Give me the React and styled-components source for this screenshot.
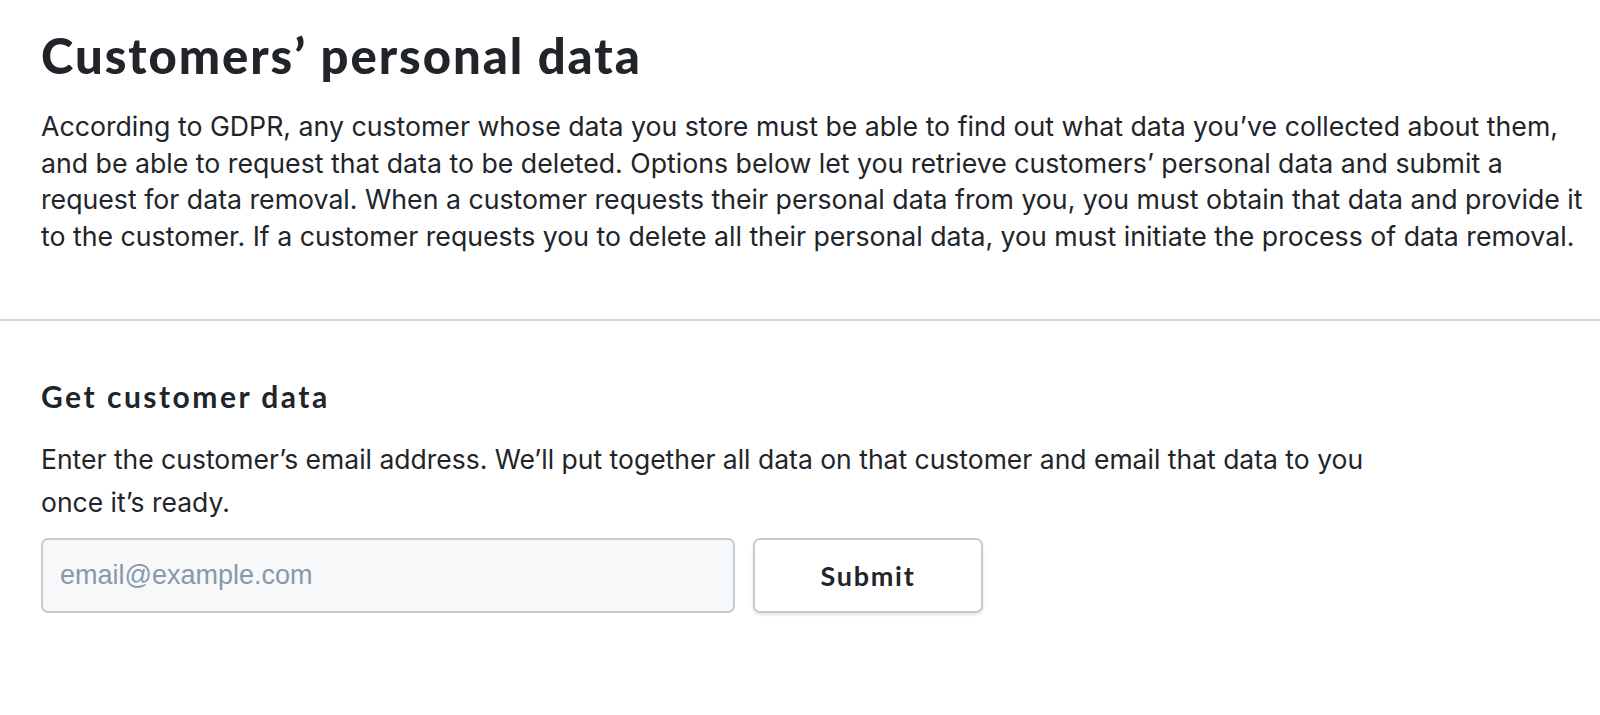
import React from "react";
import styled, { createGlobalStyle } from "styled-components";

const Global = createGlobalStyle`
  html, body { margin: 0; padding: 0; background: #ffffff; }
  body { font-family: "Inter", "Noto Sans", sans-serif; color: #212529; }
`;

const Page = styled.div`
  width: 1600px;
  min-height: 715px;
  background: #ffffff;
`;

const Section = styled.section`
  padding: ${(p) => p.$pad};
`;

const Title = styled.h1`
  margin: 0;
  font-family: "Lato", sans-serif;
  font-weight: 900;
  font-size: 49px;
  line-height: 59px;
  letter-spacing: 1.95px;
  color: #212529;
`;

const Lead = styled.p`
  margin: 23px 0 0;
  font-family: "Inter", sans-serif;
  font-size: 26.7px;
  line-height: 36.7px;
  color: #212529;
  max-width: 1555px;
`;

const Divider = styled.hr`
  margin: 0;
  border: 0;
  height: 2px;
  background: #cdd3db;
`;

const SubTitle = styled.h2`
  margin: 0;
  font-family: "Lato", sans-serif;
  font-weight: 700;
  font-size: 30px;
  line-height: 34px;
  letter-spacing: 2.5px;
  color: #212529;
`;

const Text = styled.p`
  margin: 25px 0 0;
  font-size: 26.5px;
  line-height: 43px;
  max-width: 1330px;
  color: #212529;
`;

const Form = styled.form`
  display: flex;
  gap: 18px;
  margin-top: 14px;
`;

const EmailInput = styled.input`
  box-sizing: border-box;
  width: 694px;
  height: 75px;
  padding: 0 17px;
  background: #f6f8fa;
  border: 2px solid #c3ccd6;
  border-radius: 7px;
  font-family: "Liberation Sans", "Arial", sans-serif;
  font-size: 27px;
  color: #212529;
  outline: none;
  &::placeholder { color: #8798aa; }
`;

const SubmitButton = styled.button`
  box-sizing: border-box;
  width: 230px;
  height: 75px;
  background: #ffffff;
  border: 2px solid #c3ccd6;
  border-radius: 7px;
  box-shadow: 0 2px 3px rgba(30, 40, 60, 0.12);
  font-family: "Lato", sans-serif;
  font-weight: 700;
  font-size: 27px;
  letter-spacing: 1.7px;
  color: #212529;
  cursor: pointer;
`;

export default function App() {
  return (
    <Page>
      <Global />
      <Section $pad="26px 0 64px 41px">
        <Title>Customers’ personal data</Title>
        <Lead>
          According to GDPR, any customer whose data you store must be able to find out what data you’ve collected about them,
          and be able to request that data to be deleted. Options below let you retrieve customers’ personal data and submit a
          request for data removal. When a customer requests their personal data from you, you must obtain that data and provide it
          to the customer. If a customer requests you to delete all their personal data, you must initiate the process of data removal.
        </Lead>
      </Section>
      <Divider />
      <Section $pad="58px 41px 40px">
        <SubTitle>Get customer data</SubTitle>
        <Text>
          Enter the customer’s email address. We’ll put together all data on that customer and email that data to you once it’s ready.
        </Text>
        <Form onSubmit={(e) => e.preventDefault()}>
          <EmailInput type="email" placeholder="email@example.com" />
          <SubmitButton type="submit">Submit</SubmitButton>
        </Form>
      </Section>
    </Page>
  );
}
